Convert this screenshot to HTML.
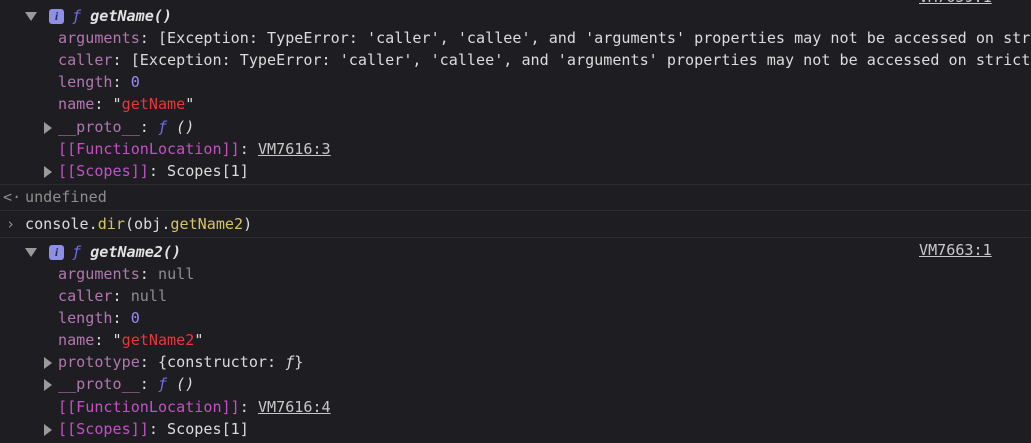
<!DOCTYPE html>
<html><head><meta charset="utf-8"><style>
html,body{margin:0;padding:0;background:#1e1d22;width:1031px;height:443px;overflow:hidden;}
body{position:relative;font-family:"DejaVu Sans Mono","Liberation Mono",monospace;font-size:15.1px;color:#dcdcdc;}
.l{position:absolute;white-space:pre;line-height:22px;height:22px;overflow:hidden;}
.k{color:#b276b0;}
.s{color:#e8363b;}
.n{color:#9a8cf0;}
.g{color:#8e8e8e;}
.y{color:#d7c464;}
.p{color:#c451c4;}
.u{text-decoration:underline;color:#c8c8c8;}
.f{color:#6f6fe8;font-style:italic;}
.b{font-style:italic;font-weight:bold;color:#e2e2e2;}
.tri{position:absolute;width:0;height:0;}
.dn{border-left:6px solid transparent;border-right:6px solid transparent;border-top:9px solid #9a9a9a;}
.rt{border-top:6px solid transparent;border-bottom:6px solid transparent;border-left:8px solid #9a9a9a;}
.i{position:absolute;width:15px;height:15px;background:#8f8fe6;border-radius:3px;color:#2a2a5a;font-size:12px;line-height:15px;text-align:center;font-weight:bold;font-family:"Liberation Serif",serif;font-style:italic;}
.sep{position:absolute;left:0;width:1031px;height:1px;background:#2c2b30;}
</style></head><body>
<div class="l" style="left:919px;top:-14px;width:100px"><span class="u">VM7659:1</span></div>
<div class="tri dn" style="left:25px;top:12px"></div>
<div class="i" style="left:49px;top:9px">i</div>
<div class="l" style="left:72px;top:5px"><span class="f">ƒ</span> <span class="b">getName()</span></div>
<div class="l" style="left:58px;top:27px;width:973px"><span class="k">arguments</span>: [Exception: TypeError: 'caller', 'callee', and 'arguments' properties may not be accessed on strict</div>
<div class="l" style="left:58px;top:49px;width:973px"><span class="k">caller</span>: [Exception: TypeError: 'caller', 'callee', and 'arguments' properties may not be accessed on strict</div>
<div class="l" style="left:58px;top:71px"><span class="k">length</span>: <span class="n">0</span></div>
<div class="l" style="left:58px;top:93px"><span class="k">name</span>: "<span class="s">getName</span>"</div>
<div class="tri rt" style="left:44px;top:122px"></div>
<div class="l" style="left:58px;top:116px"><span class="k">__proto__</span>: <span class="f">ƒ</span> <i>()</i></div>
<div class="l" style="left:58px;top:138px"><span class="p">[[FunctionLocation]]</span>: <span class="u">VM7616:3</span></div>
<div class="tri rt" style="left:44px;top:166px"></div>
<div class="l" style="left:58px;top:160px"><span class="p">[[Scopes]]</span>: Scopes[1]</div>
<div class="sep" style="top:184px"></div>
<div class="l g" style="left:3px;top:186px">&lt;·</div>
<div class="l g" style="left:25px;top:186px">undefined</div>
<div class="sep" style="top:210px"></div>
<div class="l g" style="left:6px;top:213px">›</div>
<div class="l" style="left:25px;top:213px">console.<span class="y">dir</span>(obj.<span class="y">getName2</span>)</div>
<div class="sep" style="top:237px"></div>
<div class="tri dn" style="left:25px;top:248px"></div>
<div class="i" style="left:49px;top:245px">i</div>
<div class="l" style="left:72px;top:241px"><span class="f">ƒ</span> <span class="b">getName2()</span></div>
<div class="l" style="left:919px;top:239px"><span class="u">VM7663:1</span></div>
<div class="l" style="left:58px;top:263px"><span class="k">arguments</span>: <span class="g">null</span></div>
<div class="l" style="left:58px;top:285px"><span class="k">caller</span>: <span class="g">null</span></div>
<div class="l" style="left:58px;top:307px"><span class="k">length</span>: <span class="n">0</span></div>
<div class="l" style="left:58px;top:329px"><span class="k">name</span>: "<span class="s">getName2</span>"</div>
<div class="tri rt" style="left:44px;top:357px"></div>
<div class="l" style="left:58px;top:351px"><span class="k">prototype</span>: {constructor: <i>ƒ</i>}</div>
<div class="tri rt" style="left:44px;top:379px"></div>
<div class="l" style="left:58px;top:373px"><span class="k">__proto__</span>: <span class="f">ƒ</span> <i>()</i></div>
<div class="l" style="left:58px;top:396px"><span class="p">[[FunctionLocation]]</span>: <span class="u">VM7616:4</span></div>
<div class="tri rt" style="left:44px;top:424px"></div>
<div class="l" style="left:58px;top:418px"><span class="p">[[Scopes]]</span>: Scopes[1]</div>
</body></html>
